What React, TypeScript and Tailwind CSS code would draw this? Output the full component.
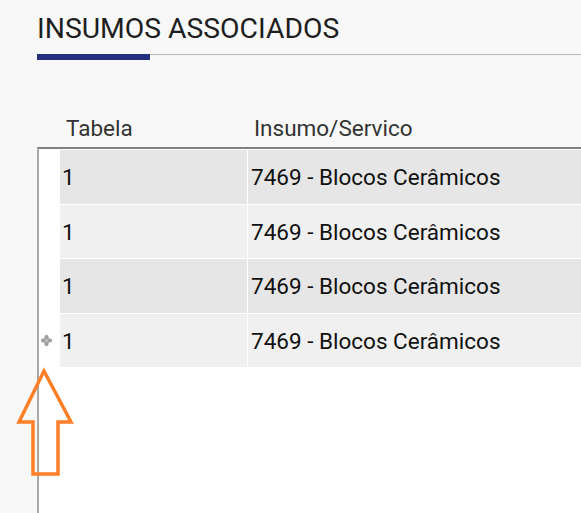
import React from 'react'

const rows = [
  { tabela: '1', insumo: '7469 - Blocos Cerâmicos' },
  { tabela: '1', insumo: '7469 - Blocos Cerâmicos' },
  { tabela: '1', insumo: '7469 - Blocos Cerâmicos' },
  { tabela: '1', insumo: '7469 - Blocos Cerâmicos' },
]

const DragHandle: React.FC = () => (
  <svg width="11" height="11" viewBox="0 0 11 11">
    <path d="M5.5 2 V9 M2 5.5 H9" stroke="#a0a0a0" strokeWidth="4.2" strokeLinecap="round" />
    <circle cx="5.5" cy="5.5" r="1.2" fill="#c8c8c8" />
  </svg>
)

const UpArrow: React.FC = () => (
  <svg
    width="80"
    height="110"
    viewBox="0 0 80 110"
    className="absolute left-0 top-[366px] pointer-events-none"
  >
    <polygon
      points="44,5 71,56 58,56 58,108 33,108 33,56 19,56"
      fill="none"
      stroke="#ff7f27"
      strokeWidth="3.5"
      strokeLinejoin="miter"
    />
  </svg>
)

export default function App() {
  return (
    <div
      className="relative w-[581px] h-[513px] overflow-hidden bg-[#f8f8f8] flex flex-col"
      style={{ fontFamily: 'Roboto, "Liberation Sans", sans-serif' }}
    >
      <div className="pl-[37px] pt-[15px]">
        <h1 className="text-[28.3px] leading-[28px] text-[#1e1e1e] whitespace-nowrap">INSUMOS ASSOCIADOS</h1>
      </div>

      <div className="ml-[37px] mt-[11px] border-t border-[#b8b8b8]">
        <div className="-mt-px h-[6px] w-[113px] bg-[#25307f]" />
      </div>

      <div className="ml-[37px] flex-1 flex flex-col">
        <div className="flex h-[87px] items-end pb-[8px] text-[22.5px] leading-[22px] text-[#333]">
          <div className="w-[23px]" />
          <div className="w-[188px] pl-[6px]">Tabela</div>
          <div className="flex-1 pl-[6px]">Insumo/Servico</div>
        </div>

        <div className="flex-1 flex flex-col bg-white border-t-2 border-l-2 border-t-[#808080] border-l-[#a8a8a8]">
          {rows.map((row, i) => (
            <div key={i} className="flex h-[54.5px] pt-px">
              <div className="w-[21px] flex items-center pl-[2px] bg-white">
                {i === rows.length - 1 && <DragHandle />}
              </div>
              <div
                className={`w-[187px] flex items-center pt-[3px] pl-[2px] text-[22.5px] text-[#111] mr-px ${
                  i % 2 === 0 ? 'bg-[#e6e6e6]' : 'bg-[#f0f0f0]'
                }`}
              >
                {row.tabela}
              </div>
              <div
                className={`flex-1 flex items-center pt-[3px] pl-[3px] text-[22.5px] text-[#111] ${
                  i % 2 === 0 ? 'bg-[#e6e6e6]' : 'bg-[#f0f0f0]'
                }`}
              >
                {row.insumo}
              </div>
            </div>
          ))}
        </div>
      </div>

      <UpArrow />
    </div>
  )
}
